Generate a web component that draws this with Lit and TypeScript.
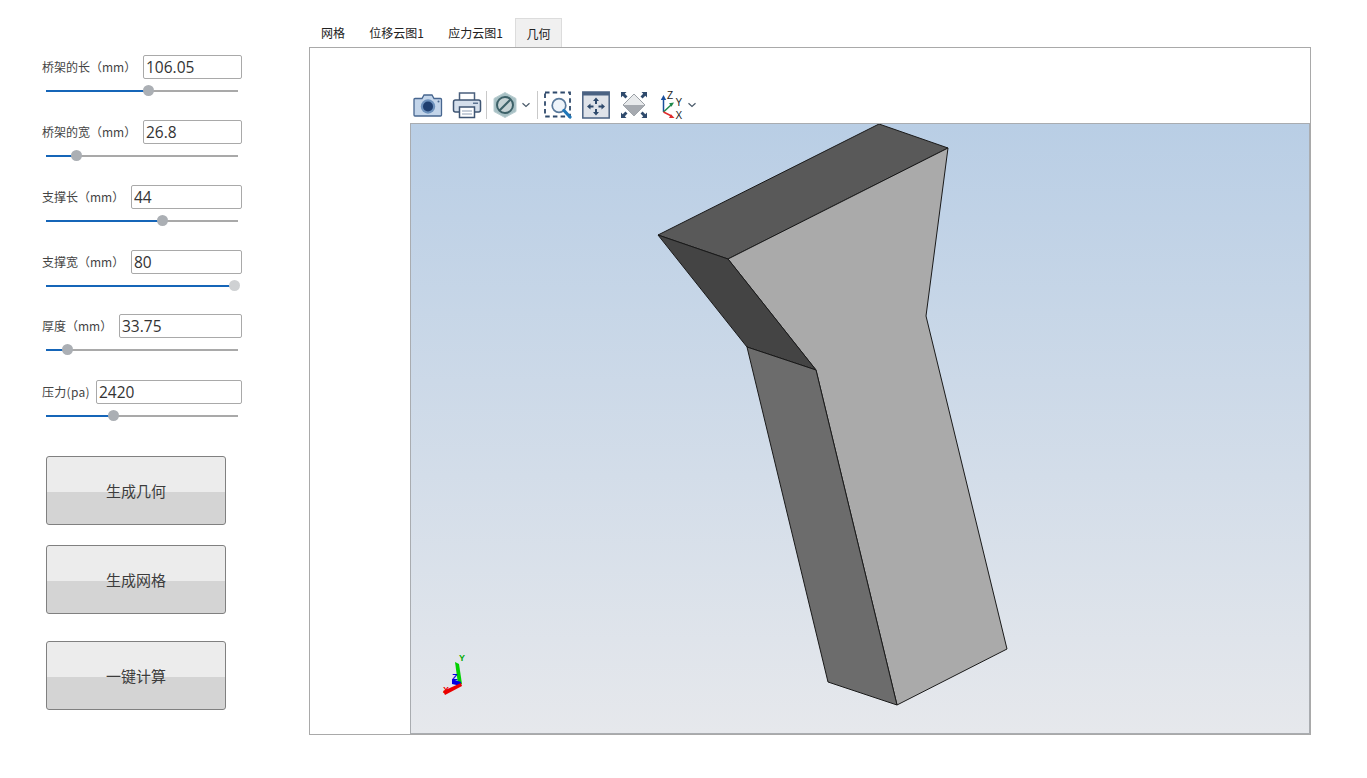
import { LitElement, html, css, svg } from "lit";
import { customElement } from "lit/decorators.js";

const params = [
  { label: "桥架的长（mm）", value: "106.05", inputW: 99, thumb: 103 },
  { label: "桥架的宽（mm）", value: "26.8", inputW: 99, thumb: 31 },
  { label: "支撑长（mm）", value: "44", inputW: 111, thumb: 117 },
  { label: "支撑宽（mm）", value: "80", inputW: 111, thumb: 189, end: true },
  { label: "厚度（mm）", value: "33.75", inputW: 123, thumb: 22 },
  { label: "压力(pa)", value: "2420", inputW: 146, thumb: 68, wide: true },
];

const camera = svg`<svg width="30" height="26" viewBox="0 0 30 26"><path d="M2 6.500h7l2-3.500h8l2 3.500h6.500a1 1 0 0 1 1 1V23a1 1 0 0 1-1 1H2a1 1 0 0 1-1-1V7.500a1 1 0 0 1 1-1z" fill="#c3d5ea" stroke="#47668f" stroke-width="1.300"/><circle cx="15" cy="14.500" r="7.200" fill="#6e92bd"/><circle cx="15" cy="14.500" r="5" fill="#1f3f70"/><circle cx="25.500" cy="9.500" r="1" fill="#47668f"/></svg>`;
const printer = svg`<svg width="30" height="28" viewBox="0 0 30 28"><path d="M7.500 9V2h15v7" fill="#fff" stroke="#4a5f7c" stroke-width="1.500"/><rect x="1.500" y="9" width="27" height="12" rx="2" fill="#d5dfeb" stroke="#3f5573" stroke-width="1.500"/><rect x="21" y="11.500" width="5" height="1.500" fill="#5d7492"/><path d="M7.500 16h15v10.500h-15z" fill="#fff" stroke="#3f5573" stroke-width="1.500"/><path d="M10 20h10M10 23h10" stroke="#8fa0b5" stroke-width="1.200"/></svg>`;
const noEntry = svg`<svg width="26" height="28" viewBox="0 0 26 28"><path d="M13 1.500 24 7.500v13L13 26.500 2 20.500v-13z" fill="#a7c0c4" stroke="#b9cdd0"/><circle cx="13" cy="14" r="8" fill="#c5d2d4" stroke="#3d6168" stroke-width="2"/><path d="M7.500 19.500 18.500 8.500" stroke="#3d6168" stroke-width="2.200"/></svg>`;
const chevron = svg`<svg width="10" height="6" viewBox="0 0 10 6"><path d="M1.500 1.200 5 4.500l3.500-3.300" fill="none" stroke="#4a5a6a" stroke-width="1.200"/></svg>`;
const zoomBox = svg`<svg width="28" height="28" viewBox="0 0 28 28"><rect x="1" y="1.500" width="25" height="24" fill="none" stroke="#2f4a6c" stroke-width="1.800" stroke-dasharray="4.500 3.200"/><circle cx="15" cy="14.500" r="6.800" fill="#eef4fa" stroke="#5a7a9c" stroke-width="1.700"/><path d="M20 19.500 26 26" stroke="#1f76b8" stroke-width="3.200" stroke-linecap="round"/></svg>`;
const arrowHead = (r: number) => svg`<path transform="translate(14 15.500) rotate(${r})" d="M0-9 3-5.500H1v3H-1v-3H-3z" fill="#2f4a6c"/>`;
const fit = svg`<svg width="28" height="28" viewBox="0 0 28 28"><rect x=".8" y="1" width="26.400" height="26" fill="#dfe3e9" stroke="#4a6282" stroke-width="1.500"/><rect x="1" y="1" width="26" height="3.500" fill="#4a6282"/>${[0, 90, 180, 270].map(arrowHead)}</svg>`;
const corner = (r: number) => svg`<path transform="rotate(${r} 14 14)" d="M1 1h5.500L4.800 2.700 7.500 5.400 5.400 7.500 2.700 4.800 1 6.500z" fill="#2f4a6c"/>`;
const iso = svg`<svg width="28" height="28" viewBox="0 0 28 28"><path d="M14 3 25 14 14 25 3 14z" fill="#e8eaec" stroke="#9ba0a6"/><path d="M14 14 25 14 14 25 3 14z" fill="#a6aab0"/>${[0, 90, 180, 270].map(corner)}</svg>`;
const axes = svg`<svg width="24" height="28" viewBox="0 0 24 28"><path d="M3.500 21V7" stroke="#1a4f9c" stroke-width="1.500"/><path d="M3.500 4 .8 9h5.400z" fill="#1a4f9c"/><path d="M3.500 21 11 14" stroke="#1f8a4c" stroke-width="1.500"/><path d="M14 11.500l-5 .8 2.500 3.500z" fill="#1f8a4c"/><path d="M3.500 21 11.500 25" stroke="#e02b2b" stroke-width="1.500"/><path d="M14.500 27l-5.500 0 2-3.700z" fill="#e02b2b"/><text x="7" y="7.500" class="axis-label">Z</text><text x="15.500" y="15" class="axis-label">Y</text><text x="15.500" y="27.500" class="axis-label">X</text></svg>`;

@customElement("app-root")
export class AppRoot extends LitElement {
  static styles = css`
    :host { display: block; width: 1367px; height: 778px; background: #fff; overflow: hidden; font-family: "Noto Sans CJK SC", "Noto Sans", sans-serif; color: #333; }
    .page { display: flex; height: 100%; }
    .side { width: 309px; flex: none; padding: 55px 67px 0 42px; box-sizing: border-box; }
    .param { height: 65px; }
    .param.short { height: 66px; }
    .param.tight { height: 64px; }
    .head { display: flex; align-items: center; justify-content: space-between; height: 24px; }
    .head label { font-size: 12px; white-space: nowrap; color: #444; margin-bottom: 2px; }
    .head label.wide { letter-spacing: .3px; }
    .head input { box-sizing: border-box; height: 24px; padding: 0 2px; border: 1px solid #a9a9a9; border-radius: 2px; font: 15.500px "Open Sans", sans-serif; color: #333; outline: none; }
    .slider { position: relative; width: 192px; height: 2px; margin: 11px 0 0 4px; background: #a9a9a9; }
    .fill { height: 100%; background: #1565b8; }
    .thumb { position: absolute; top: -5px; width: 11px; height: 11px; margin-left: -6px; border-radius: 50%; background: #abafb4; }
    .thumb.end { background: #cfd1d3; }
    .buttons { display: flex; flex-direction: column; margin: 11px 0 0 4px; }
    .buttons button { box-sizing: border-box; width: 180px; height: 69px; padding: 0; border: 1px solid #808080; border-radius: 3px; background: linear-gradient(#ececec 0 52%, #d4d4d4 52% 100%); font: 15px "Noto Sans CJK SC", sans-serif; color: #3c3c3c; }
    .buttons .gap20 { margin-top: 20px; }
    .buttons .gap27 { margin-top: 27px; }
    .main { width: 1002px; flex: none; padding-top: 18px; }
    .tabs { display: flex; height: 29px; }
    .tab { display: flex; align-items: center; justify-content: center; font-size: 12px; color: #222; box-sizing: border-box; height: 29px; }
    .tab.on { background: #f0f0f0; border: 1px solid #dcdcdc; border-bottom: none; }
    .frame { box-sizing: border-box; height: 688px; border: 1px solid #a9a9a9; padding: 43px 0 0 100px; display: flex; flex-direction: column; background: #fff; }
    .toolbar { box-sizing: border-box; display: flex; align-items: center; height: 32px; padding: 0 0 4px 3px; }
    .toolbar svg { flex: none; display: block; }
    .axis-label { font: 10px "Liberation Sans", sans-serif; fill: #222; }
    .sep { width: 1px; height: 28px; background: #c9c9c9; flex: none; }
    .view { position: relative; flex: 1; border-style: solid; border-width: 1px 1px 1px 1px; border-color: #a9acb0; background: linear-gradient(#b9cee5, #e6e8ec); }
    .view svg { position: absolute; left: 0; top: 0; display: block; }
    .triad { font: bold 9px "Liberation Sans", sans-serif; }
  `;

  render() {
    const rowClass = ["", "", "", "tight", "short", ""];
    return html`<div class="page">
      <aside class="side">
        ${params.map((p, i) => html`<div class="param ${rowClass[i]}">
          <div class="head"><label class=${p.wide ? "wide" : ""}>${p.label}</label><input style="width:${p.inputW}px" .value=${p.value} /></div>
          <div class="slider"><div class="fill" style="width:${p.thumb}px"></div><div class="thumb ${p.end ? "end" : ""}" style="left:${p.thumb}px"></div></div>
        </div>`)}
        <div class="buttons">
          <button>生成几何</button>
          <button class="gap20">生成网格</button>
          <button class="gap27">一键计算</button>
        </div>
      </aside>
      <main class="main">
        <div class="tabs">
          <div class="tab" style="width:48px">网格</div>
          <div class="tab" style="width:79px">位移云图1</div>
          <div class="tab" style="width:79px">应力云图1</div>
          <div class="tab on" style="width:47px">几何</div>
        </div>
        <div class="frame">
          <div class="toolbar">
            ${camera}<span style="width:9px"></span>${printer}<span style="width:4px"></span><div class="sep"></div><span style="width:5px"></span>${noEntry}<span style="width:3px"></span>${chevron}<span style="width:6px"></span><div class="sep"></div><span style="width:6px"></span>${zoomBox}<span style="width:10px"></span>${fit}<span style="width:10px"></span>${iso}<span style="width:12px"></span>${axes}<span style="width:3px"></span>${chevron}
          </div>
          <div class="view">
            <svg width="898" height="609" viewBox="411 124 898 609">
              <g stroke="#1a1a1a" stroke-width="1" stroke-linejoin="round">
                <polygon points="658,235 879,124 948,148 728,259" fill="#595959"/>
                <polygon points="728,259 948,148 926,316 1007,649 897,705 816,370" fill="#aaaaaa"/>
                <polygon points="658,235 728,259 816,370 747,347" fill="#444444"/>
                <polygon points="747,347 816,370 897,705 828,682" fill="#6c6c6c"/>
              </g>
              <polygon points="455,662 459,664 462,684 458,684" fill="#00d000"/>
              <polygon points="452,679 461,682 461,686 452,684" fill="#0000e0"/>
              <polygon points="443,691 461,683 462,686 445,695" fill="#e80000"/>
              <text x="459" y="661" fill="#0a0" class="triad">Y</text>
              <text x="452" y="680" fill="#00d" class="triad">Z</text>
              <text x="443" y="693" fill="#e00" class="triad">X</text>
            </svg>
          </div>
        </div>
      </main>
    </div>`;
  }
}
